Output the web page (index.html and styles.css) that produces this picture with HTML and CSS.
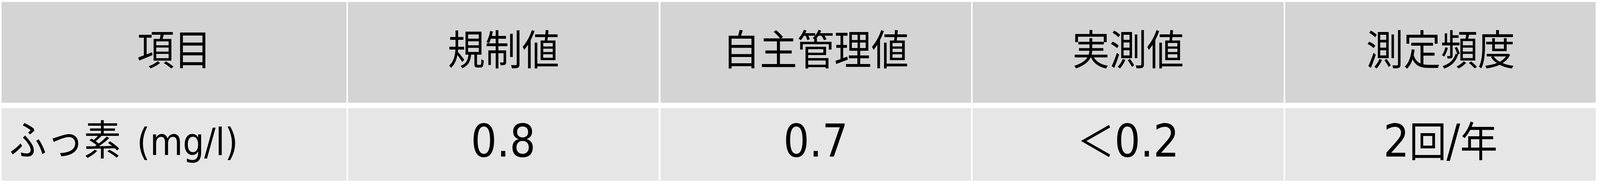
FILE: index.html
```html
<!DOCTYPE html>
<html lang="ja">
<head>
<meta charset="utf-8">
<title>ふっ素 測定</title>
<link rel="stylesheet" href="styles.css">
</head>
<body>
<div class="page">
  <div class="table">
    <div class="cell head"><span class="txt">項目</span></div>
    <div class="cell head"><span class="txt">規制値</span></div>
    <div class="cell head"><span class="txt">自主管理値</span></div>
    <div class="cell head"><span class="txt">実測値</span></div>
    <div class="cell head"><span class="txt">測定頻度</span></div>

    <div class="cell body first"><span class="txt">ふっ素 <span class="unit">(mg/l)</span></span></div>
    <div class="cell body"><span class="txt"><span class="num">0.8</span></span></div>
    <div class="cell body"><span class="txt"><span class="num">0.7</span></span></div>
    <div class="cell body"><span class="txt">＜<span class="num">0.2</span></span></div>
    <div class="cell body"><span class="txt"><span class="num">2</span>回<span class="num">/</span>年</span></div>
  </div>
</div>
<script src="script.js"></script>
</body>
</html>
```
FILE: styles.css
```css
:root {
  --sx: 1;
}

html, body {
  margin: 0;
  padding: 0;
  background: #ffffff;
}

body {
  font-family: "DejaVu Sans", "Noto Sans CJK JP", sans-serif;
  color: #000000;
}

.page {
  padding: 5px calc(12px * var(--sx)) 0 calc(5px * var(--sx));
}

.table {
  display: grid;
  grid-template-columns: 982fr repeat(4, 885.25fr);
  grid-template-rows: 258px 186px;
  column-gap: calc(5px * var(--sx));
  row-gap: 14px;
}

.cell {
  display: flex;
  align-items: center;
  justify-content: center;
  min-width: 0;
  font-size: 106px;
  line-height: 1;
  white-space: nowrap;
}

.txt {
  display: inline-block;
  transform: scaleX(var(--sx));
  transform-origin: 50% 50%;
}

.head {
  background: #d4d4d4;
  padding-bottom: 8px;
}

.body {
  background: #e6e6e6;
  padding-bottom: 18px;
}

.first {
  justify-content: flex-start;
  padding-left: calc(22px * var(--sx));
}

.first .txt {
  transform-origin: 0 50%;
}

.num {
  font-family: "DejaVu Sans", sans-serif;
  font-size: 116px;
}

.unit {
  font-family: "DejaVu Sans", sans-serif;
  font-size: 96px;
  margin-left: 0.12em;
}
```
FILE: script.js
```js
(function () {
  var design = 4560;
  var w = document.documentElement.clientWidth || window.innerWidth || design;
  var sx = Math.min(1, w / design);
  document.documentElement.style.setProperty('--sx', String(sx));
})();
```
